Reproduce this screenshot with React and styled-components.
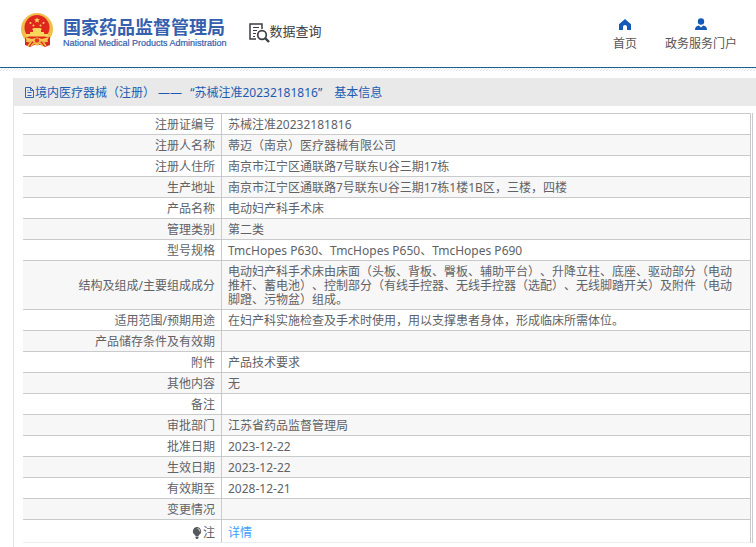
import React from "react";
import styled, { createGlobalStyle } from "styled-components";

const GlobalStyle = createGlobalStyle`
  * { box-sizing: border-box; }
  body {
    margin: 0;
    background: #fff;
    color: #606266;
    font: 12px/14px "Noto Sans", "Noto Sans CJK SC", sans-serif;
    text-spacing-trim: space-all;
  }
`;

const Header = styled.header`
  display: flex;
  align-items: flex-start;
  height: 68px;
  padding: 12px 19px 0 21px;
  border-bottom: 1px solid #1a5f8e;
`;

const Brand = styled.a`
  display: flex;
  gap: 9px;
  color: #3560ad;
  text-decoration: none;
`;

const BrandNames = styled.span`
  display: flex;
  flex-direction: column;
  padding-top: 4px;
  white-space: nowrap;
`;

const BrandTitle = styled.span`
  font: 700 18px/20px "Noto Sans CJK SC", sans-serif;
`;

const BrandSubtitle = styled.span`
  font: 9px/15px "Liberation Sans", sans-serif;
  -webkit-text-stroke: 0.2px #3560ad;
`;

const Section = styled.div`
  display: flex;
  align-items: flex-start;
  padding-top: 10px;
  margin-left: 22px;
  color: #404040;
  font: 13px/18px "Noto Sans CJK SC", sans-serif;
  white-space: nowrap;
`;

const Nav = styled.nav`
  display: flex;
  gap: 28px;
  margin-left: auto;
  padding-top: 6px;
`;

const NavLink = styled.a`
  display: flex;
  flex-direction: column;
  align-items: center;
  gap: 5px;
  color: #555;
  text-decoration: none;
  white-space: nowrap;
`;

const Hatch = styled.div`
  height: 3px;
  background: linear-gradient(135deg, #fff 40%, #e4e4e4 40% 60%, #fff 60%) 0 0 / 3px 3px;
`;

const Card = styled.main`
  margin: 7px 0 0 13px;
  padding-bottom: 4px;
  border-left: 1px solid #e4e4e4;
`;

const CardTitle = styled.h1`
  display: flex;
  align-items: center;
  height: 28px;
  margin: 0;
  padding: 2px 0 0 10px;
  background: #e9e9e9;
  color: #1c5bb0;
  font-size: 12px;
  font-weight: 400;
  white-space: pre;
`;

const Code = styled.span`
  margin: 0 12px 0 8px;
`;

const TableFrame = styled.div`
  margin: 7px 3px 0 9px;
  padding-right: 1px;
  border-right: 1px solid #c8cacf;
`;

const Table = styled.table`
  width: 100%;
  border-spacing: 0;
  border-top: 1px solid #c8cacc;
  border-right: 1px solid #c8cacf;
`;

const Row = styled.tr`
  &:nth-child(even) { background: #f7f7f7; }
  &:last-child > * {
    padding-top: 6px;
    border-bottom-color: #ebeef5;
  }
`;

const Label = styled.th`
  width: 199px;
  padding: 4px 6px 2px;
  border-right: 1px solid #c8cacc;
  border-bottom: 1px solid #c8cacc;
  font-weight: 400;
  text-align: right;
  white-space: nowrap;
`;

const Value = styled.td`
  height: 21px;
  padding: 4px 14px 2px 6px;
  border-bottom: 1px solid #c8cacc;
`;

const DetailLink = styled.a`
  color: #409eff;
  text-decoration: none;
`;

const NoteLabel = styled.span`
  display: flex;
  align-items: center;
  justify-content: flex-end;
  gap: 1px;
`;

const Emblem = () => (
  <svg width="33" height="36" viewBox="0 0 33 36" aria-hidden="true">
    <circle cx="16" cy="17" r="16" fill="#f1bd4c" />
    <path d="M4 25h25v8l-5 2-4-2h-7l-4 2-5-2z" fill="#d9271c" />
    <circle cx="16" cy="15.5" r="12.5" fill="#df281d" />
    <path d="M16 5.2l.8 2 2.2.1-1.7 1.4.6 2.1-1.9-1.2-1.9 1.2.6-2.1L13 7.300l2.200-.1z" fill="#fbd65d" />
    <g fill="#fbd65d">
      <circle cx="9.500" cy="11" r="1" /><circle cx="22.500" cy="11" r="1" />
      <circle cx="12.500" cy="13.500" r="1" /><circle cx="19.500" cy="13.500" r="1" />
      <path d="M11 17l2-1h6l2 1-1 1v2h3v2h4v2.500H5V22h4v-2h3v-2z" />
    </g>
    <path d="M4 25l7 2 5-1.500 5 1.500 7-2-2 4-6 .5-4 3-4-3-6-.5z" fill="#f6c851" />
    <path d="M5 29l5 1-3 4M27 29l-5 1 3 4" fill="none" stroke="#f1bd4c" strokeWidth="1.500" />
    <circle cx="16" cy="28.500" r="2.300" fill="#e13b22" />
    <path d="M10 34l3-3 3 2 3-2 3 3" fill="none" stroke="#f1bd4c" strokeWidth="1.500" />
  </svg>
);

const QueryIcon = () => (
  <svg width="21" height="21" viewBox="0 0 21 21" fill="none" stroke="#3d3d45" aria-hidden="true">
    <path d="M7 17H1V2h12v5" strokeWidth="1.500" />
    <path d="M4 5.500h6M4 8.500h4M4 11.500h3M4 14.500h2" />
    <circle cx="13" cy="13" r="4.300" strokeWidth="1.700" fill="#fff" />
    <path d="M16 16l4 4" strokeWidth="2.400" />
  </svg>
);

const HomeIcon = () => (
  <svg width="14" height="14" viewBox="0 0 14 14" aria-hidden="true">
    <path d="M7 1L1 6.300V12h4V9a2 2 0 0 1 4 0v3h4V6.300z" fill="#1459b8" />
  </svg>
);

const UserIcon = () => (
  <svg width="14" height="14" viewBox="0 0 14 14" aria-hidden="true">
    <circle cx="7" cy="3.500" r="3.200" fill="#1459b8" />
    <path d="M1 12c0-3 1.500-4 3.800-4.500L7 9.500l2.200-2C11.500 8 13 9 13 12z" fill="#1459b8" />
  </svg>
);

const DocumentIcon = () => (
  <svg width="11" height="12" viewBox="0 0 11 12" fill="none" stroke="#2d66b5" aria-hidden="true">
    <path d="M1.500 .5h5l3 3v7h-8zM6.500 .5v3h3M3.500 5.500h4M3.500 8.500h4M3.500 3.500h1" />
  </svg>
);

const BulbIcon = () => (
  <svg width="10" height="12" viewBox="0 0 10 12" aria-hidden="true">
    <path d="M5 0a4.300 4.300 0 0 0-2 8l.5 1h3L7 8a4.300 4.300 0 0 0-2-8zM3.500 9.500h3V11l-1 1h-1l-1-1z" fill="#55585c" />
    <path d="M5.500 1.500Q8 2 8 4.500" fill="none" stroke="#fff" strokeWidth=".8" />
  </svg>
);

const rows = [
  ["注册证编号", "苏械注准20232181816"],
  ["注册人名称", "蒂迈（南京）医疗器械有限公司"],
  ["注册人住所", "南京市江宁区通联路7号联东U谷三期17栋"],
  ["生产地址", "南京市江宁区通联路7号联东U谷三期17栋1楼1B区，三楼，四楼"],
  ["产品名称", "电动妇产科手术床"],
  ["管理类别", "第二类"],
  ["型号规格", "TmcHopes P630、TmcHopes P650、TmcHopes P690"],
  ["结构及组成/主要组成成分", "电动妇产科手术床由床面（头板、背板、臀板、辅助平台）、升降立柱、底座、驱动部分（电动推杆、蓄电池）、控制部分（有线手控器、无线手控器（选配）、无线脚踏开关）及附件（电动脚蹬、污物盆）组成。"],
  ["适用范围/预期用途", "在妇产科实施检查及手术时使用，用以支撑患者身体，形成临床所需体位。"],
  ["产品储存条件及有效期", ""],
  ["附件", "产品技术要求"],
  ["其他内容", "无"],
  ["备注", ""],
  ["审批部门", "江苏省药品监督管理局"],
  ["批准日期", "2023-12-22"],
  ["生效日期", "2023-12-22"],
  ["有效期至", "2028-12-21"],
  ["变更情况", ""],
];

export default function App() {
  return (
    <>
      <GlobalStyle />
      <Header>
        <Brand href="#">
          <Emblem />
          <BrandNames>
            <BrandTitle>国家药品监督管理局</BrandTitle>
            <BrandSubtitle>National Medical Products Administration</BrandSubtitle>
          </BrandNames>
        </Brand>
        <Section>
          <QueryIcon />
          数据查询
        </Section>
        <Nav>
          <NavLink href="#"><HomeIcon />首页</NavLink>
          <NavLink href="#"><UserIcon />政务服务门户</NavLink>
        </Nav>
      </Header>
      <Hatch />
      <Card>
        <CardTitle>
          <DocumentIcon />
          <span>
            境内医疗器械（注册） ——
            <Code>“苏械注准20232181816”</Code>
            基本信息
          </span>
        </CardTitle>
        <TableFrame>
          <Table>
            <tbody>
              {rows.map(([label, value]) => (
                <Row key={label}>
                  <Label scope="row">{label}</Label>
                  <Value>{value}</Value>
                </Row>
              ))}
              <Row>
                <Label scope="row"><NoteLabel><BulbIcon />注</NoteLabel></Label>
                <Value><DetailLink href="#">详情</DetailLink></Value>
              </Row>
            </tbody>
          </Table>
        </TableFrame>
      </Card>
    </>
  );
}
